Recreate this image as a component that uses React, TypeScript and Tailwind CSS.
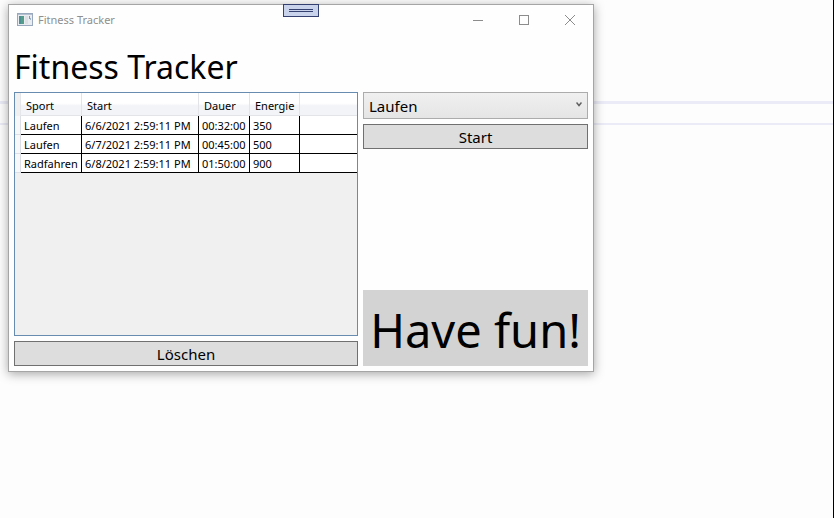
import { useState } from "react";

type Activity = { sport: string; start: string; duration: string; energy: number };

const activities: Activity[] = [
  { sport: "Laufen", start: "6/6/2021 2:59:11 PM", duration: "00:32:00", energy: 350 },
  { sport: "Laufen", start: "6/7/2021 2:59:11 PM", duration: "00:45:00", energy: 500 },
  { sport: "Radfahren", start: "6/8/2021 2:59:11 PM", duration: "01:50:00", energy: 900 },
];

const columns = ["Sport", "Start", "Dauer", "Energie"];

function AppIcon() {
  return (
    <svg width="16" height="14" viewBox="0 0 16 14" shapeRendering="crispEdges" aria-hidden="true">
      <rect x="0.5" y="0.5" width="15" height="12" fill="#e9edf2" stroke="#9aa8bd" />
      <rect x="1" y="1" width="14" height="1" fill="#b4bfd0" />
      <rect x="2" y="3" width="5" height="8" fill="#549c85" />
      <rect x="2" y="3" width="2" height="8" fill="#4a8f91" />
      <rect x="8" y="3" width="3" height="8" fill="#dcdfe3" />
      <rect x="12" y="3" width="1" height="3" fill="#78a596" />
      <rect x="13" y="5" width="1" height="2" fill="#9fb5c8" />
    </svg>
  );
}

const captionButton = "flex h-full w-[46px] items-center justify-center pb-px";

function TitleBar() {
  return (
    <header className="flex h-[30px] items-center pl-2">
      <AppIcon />
      <span className="ml-[5px] grow text-[11px] text-[#8f8f8f]">Fitness Tracker</span>
      <button aria-label="Minimieren" className={captionButton}>
        <svg width="10" height="10" viewBox="0 0 10 10" shapeRendering="crispEdges">
          <path d="M0 5.5H10" stroke="#8c8c8c" />
        </svg>
      </button>
      <button aria-label="Maximieren" className={captionButton}>
        <svg width="10" height="10" viewBox="0 0 10 10" shapeRendering="crispEdges">
          <rect x="0.5" y="0.5" width="9" height="9" fill="none" stroke="#8c8c8c" />
        </svg>
      </button>
      <button aria-label="Schließen" className={captionButton}>
        <svg width="10" height="10" viewBox="0 0 10 10">
          <path d="M0 0L10 10M10 0L0 10" stroke="#8c8c8c" />
        </svg>
      </button>
    </header>
  );
}

function ActivityTable() {
  return (
    <div className="grow border border-[#688caf] bg-[#f0f0f0]">
      <table className="w-full table-fixed border-separate border-spacing-0 text-left text-[11px]">
        <colgroup>
          <col className="w-[6px]" />
          <col className="w-[61px]" />
          <col className="w-[117px]" />
          <col className="w-[51px]" />
          <col className="w-[50px]" />
          <col />
        </colgroup>
        <thead>
          <tr className="h-[23px] bg-linear-to-b from-white from-45% to-[#f3f4f8] to-55% leading-4">
            <td className="border-r border-[#e4e6ea] bg-[#f0f0f0] p-0" />
            {columns.map((name) => (
              <th key={name} className="border-r border-b border-[#e2e4e8] pt-1 pr-0 pb-0 pl-[5px] font-normal">
                {name}
              </th>
            ))}
            <td className="border-b border-[#e2e4e8] p-0" />
          </tr>
        </thead>
        <tbody>
          {activities.map((a) => (
            <tr key={a.start} className="h-[19px] bg-white leading-4 whitespace-nowrap">
              <td className="border-r border-b border-[#dcdfe4] bg-[#f7f8fa] p-0" />
              {[a.sport, a.start, a.duration, a.energy].map((value, i) => (
                <td key={i} className="border-r border-b border-black pt-0.5 pr-0 pb-0 pl-[3px]">
                  {value}
                </td>
              ))}
              <td className="border-b border-black p-0" />
            </tr>
          ))}
        </tbody>
      </table>
    </div>
  );
}

const buttonStyle =
  "flex h-[25px] w-full items-center justify-center border border-[#707070] bg-[#dddddd] pt-0.5 text-[15px]";

export default function App() {
  const [sport, setSport] = useState("Laufen");

  return (
    <div className="relative isolate min-h-screen overflow-hidden border-r border-black bg-[#fdfdfd] pt-1 pl-2 font-['Noto_Sans','Open_Sans',sans-serif] text-black">
      <div aria-hidden="true" className="absolute inset-x-0 top-[101px] -z-10 h-6 border-t-3 border-b-2 border-[#ebebf7]" />

      <main className="relative flex w-[586px] max-w-full flex-col border border-[#a5a5a5] bg-[#fefefe] shadow-[0_2px_10px_rgba(0,0,0,0.35)]">
        <button
          aria-label="Werkzeugleiste"
          className="absolute -top-px left-[274px] flex h-[13px] w-9 items-center justify-center border border-[#34406f] bg-[#cad3ec]"
        >
          <span className="h-[3px] w-6 border-y border-[#34406f]" />
        </button>
        <TitleBar />
        <h1 className="flex h-[57px] items-center px-[5px] pt-1.5 text-[32px]">Fitness Tracker</h1>

        <div className="grid min-h-[279px] grid-cols-[1fr_225px] gap-[5px] px-[5px] pb-[5px]">
          <section className="flex flex-col gap-[5px]">
            <ActivityTable />
            <button className={buttonStyle}>Löschen</button>
          </section>

          <section className="flex flex-col gap-[5px]">
            <div className="relative">
              <select
                aria-label="Sport"
                value={sport}
                onChange={(e) => setSport(e.target.value)}
                className="block h-[27px] w-full appearance-none border border-[#acacac] bg-linear-to-b from-[#f0f0f0] to-[#e5e5e5] px-[5px] pt-0.5 text-[15px]"
              >
                <option>Laufen</option>
                <option>Radfahren</option>
              </select>
              <svg
                className="pointer-events-none absolute top-[10px] right-[6px]"
                width="6"
                height="5"
                viewBox="0 0 6 5"
                aria-hidden="true"
              >
                <path d="M0.5 0.5L3 3.5L5.5 0.5" fill="none" stroke="#606060" strokeWidth="1.5" />
              </svg>
            </div>
            <button className={buttonStyle}>Start</button>
            <p className="mt-auto flex h-[76px] items-center justify-center bg-[#d3d3d3] pt-1 text-[47px] whitespace-nowrap">
              Have fun!
            </p>
          </section>
        </div>
      </main>
    </div>
  );
}
